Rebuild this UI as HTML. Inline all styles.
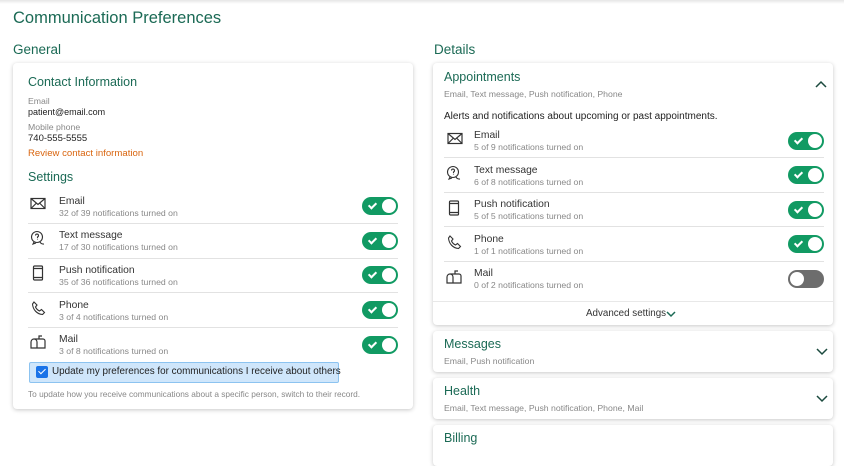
<!DOCTYPE html>
<html><head><style>
*{margin:0;padding:0;box-sizing:border-box}
body{width:844px;height:440px;overflow:hidden;background:#fff;font-family:"Liberation Sans",sans-serif;position:relative;color:#222}
.a{position:absolute;white-space:nowrap}
.g{color:#1b6a55}
.card{position:absolute;background:#fff;border-radius:4px;box-shadow:0 1px 4px rgba(0,0,0,.22)}
.t{font-size:10.3px;color:#333}
.s{font-size:8.7px;color:#888}
.sep{position:absolute;height:1px;background:#e2e2e2}
.tog{position:absolute;width:36px;height:18px;border-radius:9px;background:#119a63}
.tog:after{content:"";position:absolute;right:2px;top:2px;width:14px;height:14px;border-radius:50%;background:#fff}
.tog:before{content:"";position:absolute;left:8px;top:4px;width:3px;height:6px;border:solid #fff;border-width:0 2px 2px 0;transform:rotate(45deg)}
.off{background:#6d6d6d}.off:after{left:2px;right:auto}.off:before{display:none}
svg{position:absolute}
</style></head><body>
<div class="a" style="left:0;top:0;width:844px;height:4px;background:linear-gradient(#e6e6e6,#fff)"></div>
<div class="a g" style="left:13px;top:9px;font-size:16.5px">Communication Preferences</div>
<div class="a g" style="left:13px;top:42px;font-size:13.5px">General</div>
<div class="a g" style="left:434px;top:42px;font-size:13.5px">Details</div>

<div class="card" style="left:13px;top:63px;width:400px;height:346px"></div>
<div class="a g" style="left:28px;top:75px;font-size:12.5px">Contact Information</div>
<div class="a s" style="left:28px;top:96px">Email</div>
<div class="a t" style="left:28px;top:107px;font-size:9px;color:#222">patient@email.com</div>
<div class="a s" style="left:28px;top:122px">Mobile phone</div>
<div class="a t" style="left:28px;top:133px;font-size:9.5px;color:#222">740-555-5555</div>
<div class="a" style="left:28px;top:148px;font-size:9.6px;color:#d9650f">Review contact information</div>
<div class="a g" style="left:28px;top:170px;font-size:12.5px">Settings</div>

<div class="a t" style="left:59px;top:196px">Email</div><div class="a s" style="left:59px;top:208px">32 of 39 notifications turned on</div><div class="tog" style="left:362px;top:197px"></div>
<div class="sep" style="left:28px;top:223px;width:370px"></div>
<div class="a t" style="left:59px;top:230px">Text message</div><div class="a s" style="left:59px;top:242px">17 of 30 notifications turned on</div><div class="tog" style="left:362px;top:232px"></div>
<div class="sep" style="left:28px;top:258px;width:370px"></div>
<div class="a t" style="left:59px;top:265px">Push notification</div><div class="a s" style="left:59px;top:277px">35 of 36 notifications turned on</div><div class="tog" style="left:362px;top:266px"></div>
<div class="sep" style="left:28px;top:292px;width:370px"></div>
<div class="a t" style="left:59px;top:300px">Phone</div><div class="a s" style="left:59px;top:312px">3 of 4 notifications turned on</div><div class="tog" style="left:362px;top:301px"></div>
<div class="sep" style="left:28px;top:327px;width:370px"></div>
<div class="a t" style="left:59px;top:334px">Mail</div><div class="a s" style="left:59px;top:346px">3 of 8 notifications turned on</div><div class="tog" style="left:362px;top:336px"></div>

<div class="a" style="left:29px;top:362px;width:310px;height:21px;background:#cfe6fb;border:1px solid #8cc3f0;border-radius:2px"></div>
<div class="a" style="left:36px;top:366px;width:12px;height:12px;background:#1a73e8;border-radius:2px"></div>
<div class="a" style="left:40px;top:367px;width:4px;height:7px;border:solid #fff;border-width:0 1.5px 1.5px 0;transform:rotate(45deg)"></div>
<div class="a" style="left:52px;top:366px;font-size:9.9px;color:#222">Update my preferences for communications I receive about others</div>
<div class="a s" style="left:28px;top:389px;font-size:8.3px">To update how you receive communications about a specific person, switch to their record.</div>

<svg style="left:30px;top:197px" width="16" height="13" viewBox="0 0 16 13" fill="none" stroke="#333" stroke-width="1.2"><rect x="1" y="1.5" width="14" height="10"/><path d="M1 1.5l7 6 7-6M1 11.5l5-5M15 11.5l-5-5"/></svg>
<svg style="left:30px;top:230px" width="16" height="16" viewBox="0 0 16 16" fill="none" stroke="#333" stroke-width="1.1"><circle cx="7" cy="7" r="5.5"/><path d="M4 12l-1 2 3-1M10 12a4 4 0 0 0 4 2M5.5 5.5a1.5 1.5 0 1 1 2 1.5v1.2M7.5 9.5v.5"/></svg>
<svg style="left:32px;top:265px" width="12" height="16" viewBox="0 0 12 16" fill="none" stroke="#333" stroke-width="1.2"><rect x="1.5" y="1" width="9" height="14" rx="1"/><path d="M1.5 3.5h9M1.5 12.5h9"/></svg>
<svg style="left:31px;top:301px" width="15" height="15" viewBox="0 0 15 15" fill="none" stroke="#333" stroke-width="1.1"><path d="M3 1l3 3-1.5 2a8 8 0 0 0 4 4L10.5 8.5l3 3-2 2C6 13 2 9 1.5 3z"/></svg>
<svg style="left:30px;top:335px" width="16" height="14" viewBox="0 0 16 14" fill="none" stroke="#333" stroke-width="1.2"><path d="M1 13V7a3 3 0 0 1 6 0v6zM4 4h9a2 2 0 0 1 2 2v7H7M9 4V1h3"/></svg>

<div class="card" style="left:433px;top:63px;width:400px;height:262px"></div>
<div class="a g" style="left:444px;top:70px;font-size:12.5px">Appointments</div>
<div class="a s" style="left:444px;top:89px">Email, Text message, Push notification, Phone</div>
<svg style="left:815px;top:80px" width="12" height="8" viewBox="0 0 12 8" fill="none" stroke="#1b4a3e" stroke-width="1.5"><path d="M1 7l5-5 5 5"/></svg>
<div class="a t" style="left:444px;top:111px;color:#222;font-size:10px">Alerts and notifications about upcoming or past appointments.</div>

<div class="a t" style="left:474px;top:130px">Email</div><div class="a s" style="left:474px;top:142px">5 of 9 notifications turned on</div><div class="tog" style="left:788px;top:132px"></div>
<div class="sep" style="left:444px;top:157px;width:380px"></div>
<div class="a t" style="left:474px;top:165px">Text message</div><div class="a s" style="left:474px;top:177px">6 of 8 notifications turned on</div><div class="tog" style="left:788px;top:166px"></div>
<div class="sep" style="left:444px;top:192px;width:380px"></div>
<div class="a t" style="left:474px;top:199px">Push notification</div><div class="a s" style="left:474px;top:211px">5 of 5 notifications turned on</div><div class="tog" style="left:788px;top:201px"></div>
<div class="sep" style="left:444px;top:226px;width:380px"></div>
<div class="a t" style="left:474px;top:234px">Phone</div><div class="a s" style="left:474px;top:246px">1 of 1 notifications turned on</div><div class="tog" style="left:788px;top:235px"></div>
<div class="sep" style="left:444px;top:261px;width:380px"></div>
<div class="a t" style="left:474px;top:268px">Mail</div><div class="a s" style="left:474px;top:280px">0 of 2 notifications turned on</div><div class="tog off" style="left:788px;top:270px"></div>
<div class="sep" style="left:433px;top:301px;width:400px;background:#e8e8e8"></div>
<div class="a" style="left:586px;top:308px;font-size:9.8px;color:#333">Advanced settings</div>
<svg style="left:666px;top:311px" width="10" height="7" viewBox="0 0 10 7" fill="none" stroke="#1b6a55" stroke-width="1.5"><path d="M1 1l4 4 4-4"/></svg>

<svg style="left:447px;top:132px" width="16" height="13" viewBox="0 0 16 13" fill="none" stroke="#333" stroke-width="1.2"><rect x="1" y="1.5" width="14" height="10"/><path d="M1 1.5l7 6 7-6M1 11.5l5-5M15 11.5l-5-5"/></svg>
<svg style="left:446px;top:165px" width="16" height="16" viewBox="0 0 16 16" fill="none" stroke="#333" stroke-width="1.1"><circle cx="7" cy="7" r="5.5"/><path d="M4 12l-1 2 3-1M10 12a4 4 0 0 0 4 2M5.5 5.5a1.5 1.5 0 1 1 2 1.5v1.2M7.5 9.5v.5"/></svg>
<svg style="left:448px;top:200px" width="12" height="16" viewBox="0 0 12 16" fill="none" stroke="#333" stroke-width="1.2"><rect x="1.5" y="1" width="9" height="14" rx="1"/><path d="M1.5 3.5h9M1.5 12.5h9"/></svg>
<svg style="left:447px;top:235px" width="15" height="15" viewBox="0 0 15 15" fill="none" stroke="#333" stroke-width="1.1"><path d="M3 1l3 3-1.5 2a8 8 0 0 0 4 4L10.5 8.5l3 3-2 2C6 13 2 9 1.5 3z"/></svg>
<svg style="left:446px;top:270px" width="16" height="14" viewBox="0 0 16 14" fill="none" stroke="#333" stroke-width="1.2"><path d="M1 13V7a3 3 0 0 1 6 0v6zM4 4h9a2 2 0 0 1 2 2v7H7M9 4V1h3"/></svg>

<div class="card" style="left:433px;top:331px;width:400px;height:41px"></div>
<div class="a g" style="left:444px;top:337px;font-size:12.5px">Messages</div>
<div class="a s" style="left:444px;top:356px">Email, Push notification</div>
<svg style="left:816px;top:348px" width="12" height="8" viewBox="0 0 12 8" fill="none" stroke="#1b4a3e" stroke-width="1.5"><path d="M1 1l5 5 5-5"/></svg>

<div class="card" style="left:433px;top:378px;width:400px;height:41px"></div>
<div class="a g" style="left:444px;top:384px;font-size:12.5px">Health</div>
<div class="a s" style="left:444px;top:403px">Email, Text message, Push notification, Phone, Mail</div>
<svg style="left:816px;top:395px" width="12" height="8" viewBox="0 0 12 8" fill="none" stroke="#1b4a3e" stroke-width="1.5"><path d="M1 1l5 5 5-5"/></svg>

<div class="card" style="left:433px;top:425px;width:400px;height:41px"></div>
<div class="a g" style="left:444px;top:431px;font-size:12.5px">Billing</div>
</body></html>
